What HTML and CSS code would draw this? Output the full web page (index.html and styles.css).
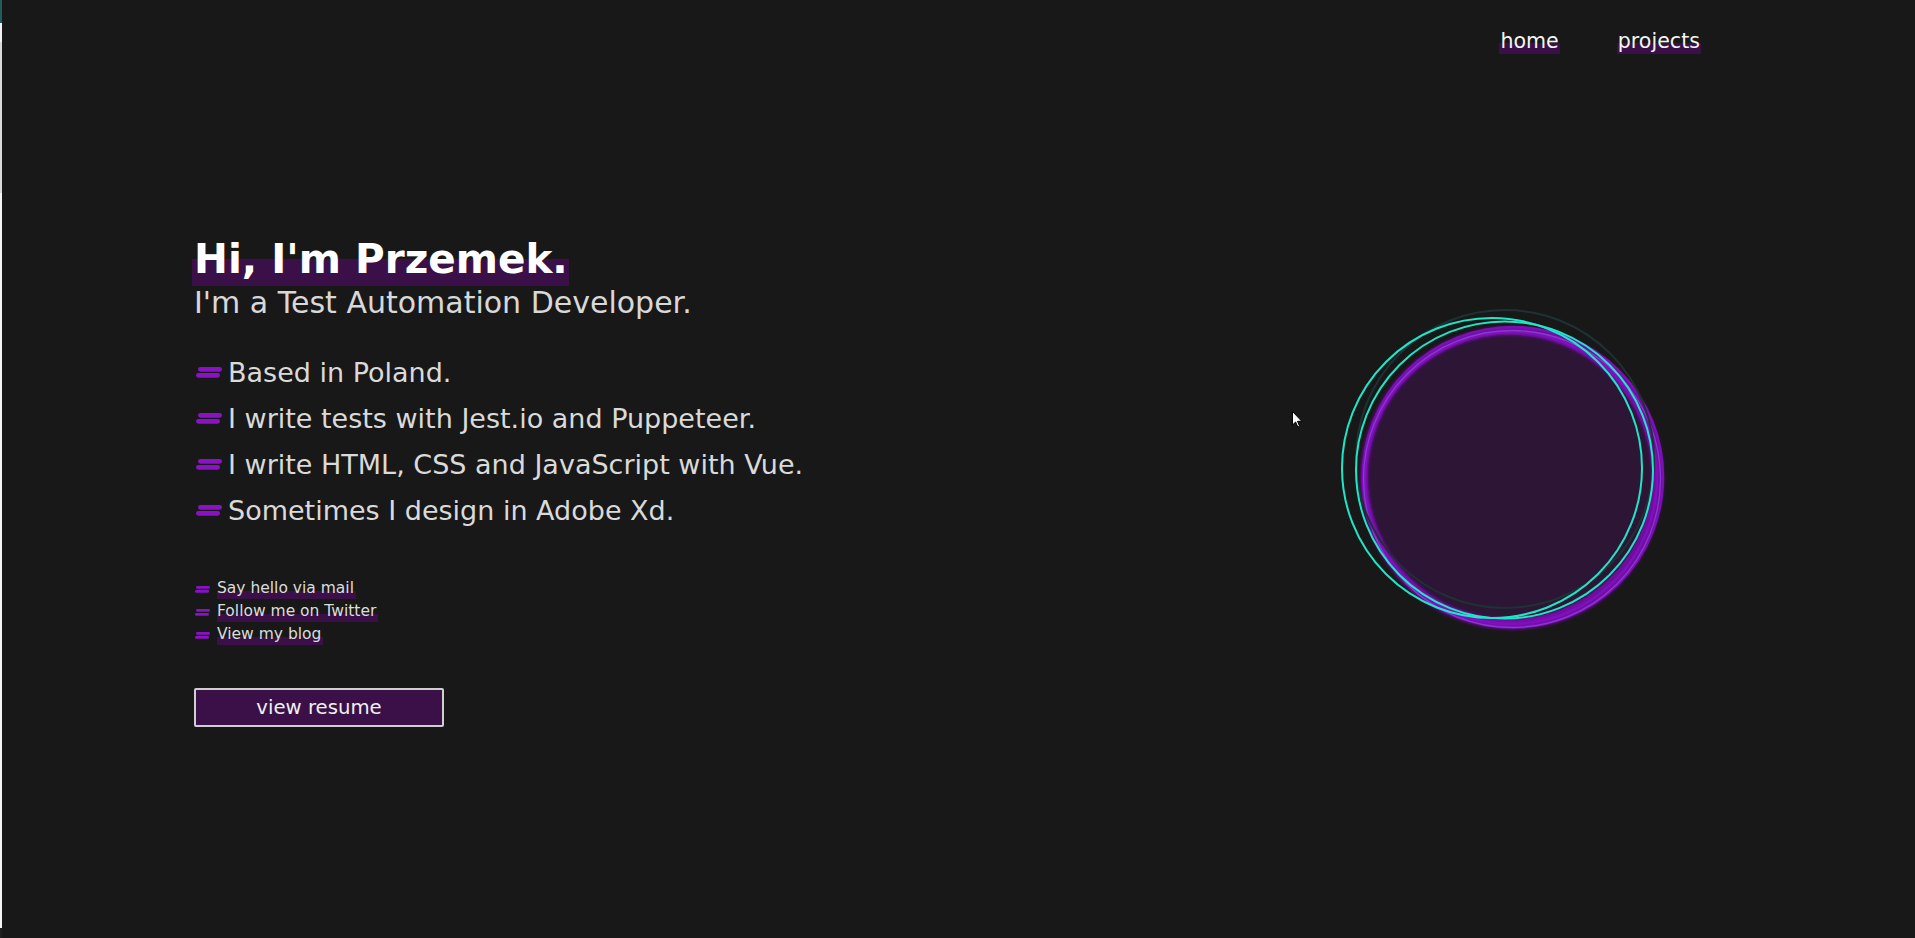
FILE: index.html
```html
<!DOCTYPE html>
<html lang="en">
<head>
<meta charset="utf-8">
<title>Przemek</title>
<link rel="stylesheet" href="styles.css">
</head>
<body>
<div class="edge"><span class="edge-a"></span><span class="edge-b"></span><span class="edge-c"></span><span class="edge-d"></span><span class="edge-e"></span></div>
<div class="page">
  <nav class="nav"><a class="nav-link" href="#">home</a><a class="nav-link" href="#">projects</a></nav>
  <main class="hero">
    <section class="intro">
      <h1 class="title">Hi, I'm Przemek.</h1>
      <p class="subtitle">I'm a Test Automation Developer.</p>
      <ul class="facts">
        <li class="fact"><svg class="dash" viewBox="0 0 26 11"><rect x="2" y="0" width="24" height="4.7" rx="2.35"/><rect x="0" y="6" width="24" height="4.7" rx="2.35"/></svg>Based in Poland.</li>
        <li class="fact"><svg class="dash" viewBox="0 0 26 11"><rect x="2" y="0" width="24" height="4.7" rx="2.35"/><rect x="0" y="6" width="24" height="4.7" rx="2.35"/></svg>I write tests with Jest.io and Puppeteer.</li>
        <li class="fact"><svg class="dash" viewBox="0 0 26 11"><rect x="2" y="0" width="24" height="4.7" rx="2.35"/><rect x="0" y="6" width="24" height="4.7" rx="2.35"/></svg>I write HTML, CSS and JavaScript with Vue.</li>
        <li class="fact"><svg class="dash" viewBox="0 0 26 11"><rect x="2" y="0" width="24" height="4.7" rx="2.35"/><rect x="0" y="6" width="24" height="4.7" rx="2.35"/></svg>Sometimes I design in Adobe Xd.</li>
      </ul>
      <ul class="links">
        <li class="link-row"><svg class="dash-sm" viewBox="0 0 15 7"><rect x="1" y="0" width="14" height="2.8" rx="1.4"/><rect x="0" y="4" width="14" height="2.8" rx="1.4"/></svg><a class="link" href="#">Say hello via mail</a></li>
        <li class="link-row"><svg class="dash-sm" viewBox="0 0 15 7"><rect x="1" y="0" width="14" height="2.8" rx="1.4"/><rect x="0" y="4" width="14" height="2.8" rx="1.4"/></svg><a class="link" href="#">Follow me on Twitter</a></li>
        <li class="link-row"><svg class="dash-sm" viewBox="0 0 15 7"><rect x="1" y="0" width="14" height="2.8" rx="1.4"/><rect x="0" y="4" width="14" height="2.8" rx="1.4"/></svg><a class="link" href="#">View my blog</a></li>
      </ul>
      <a class="resume" href="#">view resume</a>
    </section>
    <div class="orb">
      <svg viewBox="0 0 340 340" width="340" height="340">
        <defs>
          <filter id="glow" x="-10%" y="-10%" width="120%" height="120%">
            <feGaussianBlur stdDeviation="1.6"/>
          </filter>
        </defs>
        <circle cx="177" cy="176" r="144" fill="#2c1535"/>
        <g fill="none" filter="url(#glow)">
          <circle cx="179" cy="178" r="148" stroke="#7308a8" stroke-width="7"/>
          <circle cx="177" cy="177" r="144" stroke="#7a0cb2" stroke-width="4"/>
        </g>
        <g fill="none">
          <circle cx="180" cy="177" r="150" stroke="#7d0fb6" stroke-width="2.5"/>
          <circle cx="178" cy="178" r="146" stroke="#820fbe" stroke-width="2.5"/>
          <circle cx="179" cy="179" r="148.5" stroke="#8a4ad6" stroke-width="1.3" opacity="0.75"/>
          <circle cx="172" cy="159" r="149" stroke="#1e3236" stroke-width="2"/>
          <circle cx="159" cy="168" r="150" stroke="#1fe6c6" stroke-width="2"/>
          <circle cx="171.5" cy="170" r="148.5" stroke="#1fe6c6" stroke-width="2"/>
        </g>
      </svg>
    </div>
  </main>
</div>
<svg class="cursor" viewBox="0 0 11 17" width="11" height="17"><path d="M0.5 0.5 L0.5 14 L3.6 11 L5.8 16 L7.6 15.2 L5.5 10.3 L9.8 10.3 Z" fill="#fff" stroke="#000" stroke-width="1"/></svg>
</body>
</html>
```

FILE: styles.css
```css
html, body {
  margin: 0;
  height: 100%;
}

body {
  display: flex;
  background: #181818;
  font-family: "DejaVu Sans", "Liberation Sans", sans-serif;
  overflow: hidden;
  position: relative;
}

.edge {
  width: 2px;
  flex: none;
  display: flex;
  flex-direction: column;
}

.edge-a { height: 23px; background: #1f5b5f; }
.edge-b { height: 19px; background: #f2f2f2; }
.edge-c { height: 151px; background: #dadada; }
.edge-d { flex: 1; background: #f5f5f5; }
.edge-e { height: 10px; background: #202020; }

.page {
  flex: 1;
  display: flex;
  flex-direction: column;
}

.nav {
  display: flex;
  justify-content: flex-end;
  gap: 57px;
  padding: 29px 214px 0 0;
}

.nav-link {
  display: inline-block;
  font-size: 20.6px;
  line-height: 24px;
  padding: 0 1px 1px;
  color: #f4f4f4;
  text-decoration: none;
  background: linear-gradient(transparent 14px, #3b1048 14px);
}

.hero {
  display: flex;
  align-items: flex-start;
  padding-left: 190px;
}

.intro {
  display: flex;
  flex-direction: column;
  align-items: flex-start;
  padding-top: 181px;
}

.title {
  margin: 0;
  font-size: 40.5px;
  font-weight: 700;
  line-height: 48px;
  color: #ffffff;
  padding: 0 1px 3px 2px;
  background: linear-gradient(transparent 24px, #3b1048 24px);
}

.subtitle {
  margin: 0;
  padding-left: 2px;
  font-size: 30px;
  line-height: 34px;
  color: #d8d8d8;
}

.facts {
  list-style: none;
  margin: 30px 0 0;
  padding: 0;
}

.fact {
  font-size: 27px;
  line-height: 46px;
  color: #dadada;
}

.dash {
  width: 26px;
  height: 11px;
  margin: 0 6px 4px 4px;
  vertical-align: baseline;
  fill: #8a12c4;
}

.links {
  list-style: none;
  margin: 43px 0 0;
  padding: 0;
}

.link-row {
  font-size: 15.5px;
  line-height: 23px;
}

.dash-sm {
  width: 15px;
  height: 7px;
  margin: 0 7px 0 3px;
  vertical-align: baseline;
  fill: #8a12c4;
}

.link {
  display: inline-block;
  color: #dcdcdc;
  text-decoration: none;
  padding-right: 2px;
  background: linear-gradient(transparent 14px, #3b1048 14px, #3b1048 22px, transparent 22px);
}

.resume {
  margin: 42px 0 0 2px;
  width: 250px;
  height: 39px;
  box-sizing: border-box;
  border: 2px solid #cfcfcf;
  border-radius: 2px;
  background: #3b1048;
  color: #f0f0f0;
  font-size: 19.7px;
  display: flex;
  align-items: center;
  justify-content: center;
  text-decoration: none;
}

.orb {
  margin: 246px 242px 0 auto;
  width: 340px;
  height: 340px;
}

.orb svg {
  display: block;
}

.cursor {
  position: absolute;
  left: 1292px;
  top: 411px;
}
```
